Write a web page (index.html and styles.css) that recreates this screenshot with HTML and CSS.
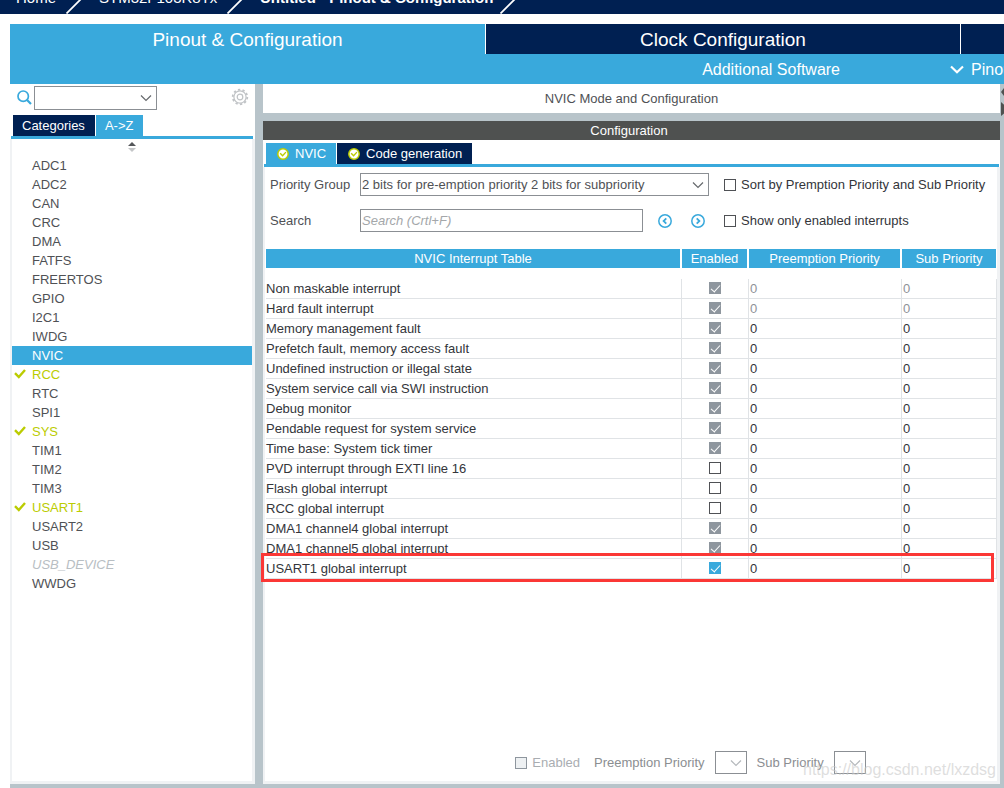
FILE: index.html
```html
<!DOCTYPE html>
<html lang="en">
<head>
<meta charset="utf-8">
<title>Pinout &amp; Configuration</title>
<link rel="stylesheet" href="styles.css">
</head>
<body>
<svg class="defs" aria-hidden="true">
  <symbol id="chevron" viewBox="0 0 12 8"><path d="M1 1.5 6 6.5 11 1.5" fill="none" stroke="currentColor" stroke-width="1.2"/></symbol>
  <symbol id="slash" viewBox="0 0 16 16"><path d="M0.5 15.5 15.5 0.5" fill="none" stroke="#fff" stroke-width="1.8"/></symbol>
  <symbol id="tick" viewBox="0 0 12 10"><path d="M1 4.2 4.8 8 11 1" fill="none" stroke="#bbcc01" stroke-width="2.4"/></symbol>
  <symbol id="ok" viewBox="0 0 12 12"><circle cx="6" cy="6" r="5.2" fill="#fff" stroke="#bbcc01" stroke-width="1.5"/><path d="M3.2 5.2 5.6 7.7 8.9 4.1" fill="none" stroke="#bbcc01" stroke-width="1.4"/></symbol>
</svg>

<nav class="crumbs" aria-label="Breadcrumb">
  <a class="crumb crumb-home" href="#">Home</a>
  <svg class="slash"><use href="#slash"/></svg>
  <a class="crumb crumb-chip" href="#">STM32F103R8Tx</a>
  <svg class="slash"><use href="#slash"/></svg>
  <a class="crumb crumb-page" href="#">Untitled - Pinout &amp; Configuration</a>
  <svg class="slash"><use href="#slash"/></svg>
</nav>

<div class="app">
  <div class="main-tabs">
    <button class="main-tab active" type="button">Pinout &amp; Configuration</button>
    <button class="main-tab" type="button">Clock Configuration</button>
    <button class="main-tab" type="button" aria-label="Project Manager"></button>
  </div>
  <div class="toolbar">
    <button class="tool" type="button">Additional Software</button>
    <button class="tool tool-menu" type="button">
      <svg class="tool-chevron" viewBox="0 0 14 9"><path d="M1 1.5 7 7.2 13 1.5" fill="none" stroke="#fff" stroke-width="2.2"/></svg>
      Pinout
    </button>
  </div>

  <div class="workspace">
    <aside class="sidebar">
      <div class="find">
        <svg class="lens" viewBox="0 0 15 15"><circle cx="6.2" cy="6.2" r="5.2" fill="none" stroke="#39a9dc" stroke-width="1.7"/><path d="M9.8 9.8 14 14" stroke="#39a9dc" stroke-width="2.2"/></svg>
        <div class="combo combo-find">
          <select aria-label="Find peripheral"><option></option></select>
          <svg class="combo-arrow"><use href="#chevron"/></svg>
        </div>
        <button class="gear" type="button" aria-label="Settings">
          <svg viewBox="0 0 18 18" width="18" height="18"><g fill="none" stroke="#c0c3c6"><circle cx="9" cy="9" r="6.1" stroke-width="1.2"/><circle cx="9" cy="9" r="7.3" stroke-width="1.8" stroke-dasharray="2.3 2.287"/><circle cx="9" cy="9" r="2.8" stroke-width="1.2"/></g></svg>
        </button>
      </div>
      <div class="tabs">
        <button class="tab" type="button">Categories</button>
        <button class="tab active" type="button">A-&gt;Z</button>
      </div>
      <div class="list-panel">
        <svg class="sorter" viewBox="0 0 8 10"><path d="M0 4 4 0 8 4z" fill="#55575a"/><path d="M0 6h8L4 10z" fill="#c4c6c8"/></svg>
        <ul class="list">
          <li>ADC1</li>
          <li>ADC2</li>
          <li>CAN</li>
          <li>CRC</li>
          <li>DMA</li>
          <li>FATFS</li>
          <li>FREERTOS</li>
          <li>GPIO</li>
          <li>I2C1</li>
          <li>IWDG</li>
          <li class="selected">NVIC</li>
          <li class="on"><svg><use href="#tick"/></svg>RCC</li>
          <li>RTC</li>
          <li>SPI1</li>
          <li class="on"><svg><use href="#tick"/></svg>SYS</li>
          <li>TIM1</li>
          <li>TIM2</li>
          <li>TIM3</li>
          <li class="on"><svg><use href="#tick"/></svg>USART1</li>
          <li>USART2</li>
          <li>USB</li>
          <li class="off">USB_DEVICE</li>
          <li>WWDG</li>
        </ul>
      </div>
    </aside>

    <main class="mode">
      <h1 class="mode-title">NVIC Mode and Configuration</h1>
      <section class="config">
        <h2 class="config-title">Configuration</h2>
        <div class="tabs config-tabs">
          <button class="tab active" type="button"><svg><use href="#ok"/></svg>NVIC</button>
          <button class="tab" type="button"><svg><use href="#ok"/></svg>Code generation</button>
        </div>
        <div class="config-body">
          <div class="options">
            <label for="group">Priority Group</label>
            <div class="combo">
              <select id="group"><option>2 bits for pre-emption priority 2 bits for subpriority</option></select>
              <svg class="combo-arrow"><use href="#chevron"/></svg>
            </div>
            <label class="check"><input type="checkbox">Sort by Premption Priority and Sub Priority</label>

            <label for="search">Search</label>
            <div class="search">
              <input id="search" type="text" placeholder="Search (Crtl+F)">
              <button type="button" aria-label="Previous"><svg viewBox="0 0 14 14"><circle cx="7" cy="7" r="6.2" fill="none" stroke="#39a9dc" stroke-width="1.5"/><path d="M8.3 4.3 5.6 7l2.7 2.7" fill="none" stroke="#39a9dc" stroke-width="1.8"/></svg></button>
              <button type="button" aria-label="Next"><svg viewBox="0 0 14 14"><circle cx="7" cy="7" r="6.2" fill="none" stroke="#39a9dc" stroke-width="1.5"/><path d="M5.7 4.3 8.4 7l-2.7 2.7" fill="none" stroke="#39a9dc" stroke-width="1.8"/></svg></button>
            </div>
            <label class="check"><input type="checkbox">Show only enabled interrupts</label>
          </div>

          <div class="table-wrap">
            <table class="irq">
              <colgroup><col><col class="col-enabled"><col class="col-preempt"><col class="col-sub"></colgroup>
              <thead>
                <tr><th>NVIC Interrupt Table</th><th>Enabled</th><th>Preemption Priority</th><th>Sub Priority</th></tr>
              </thead>
              <tbody>
                <tr class="spacer"><td colspan="4"></td></tr>
                <tr class="dim"><td>Non maskable interrupt</td><td><input type="checkbox" checked disabled aria-label="Enabled"></td><td>0</td><td>0</td></tr>
                <tr class="dim"><td>Hard fault interrupt</td><td><input type="checkbox" checked disabled aria-label="Enabled"></td><td>0</td><td>0</td></tr>
                <tr><td>Memory management fault</td><td><input type="checkbox" checked disabled aria-label="Enabled"></td><td>0</td><td>0</td></tr>
                <tr><td>Prefetch fault, memory access fault</td><td><input type="checkbox" checked disabled aria-label="Enabled"></td><td>0</td><td>0</td></tr>
                <tr><td>Undefined instruction or illegal state</td><td><input type="checkbox" checked disabled aria-label="Enabled"></td><td>0</td><td>0</td></tr>
                <tr><td>System service call via SWI instruction</td><td><input type="checkbox" checked disabled aria-label="Enabled"></td><td>0</td><td>0</td></tr>
                <tr><td>Debug monitor</td><td><input type="checkbox" checked disabled aria-label="Enabled"></td><td>0</td><td>0</td></tr>
                <tr><td>Pendable request for system service</td><td><input type="checkbox" checked disabled aria-label="Enabled"></td><td>0</td><td>0</td></tr>
                <tr><td>Time base: System tick timer</td><td><input type="checkbox" checked disabled aria-label="Enabled"></td><td>0</td><td>0</td></tr>
                <tr><td>PVD interrupt through EXTI line 16</td><td><input type="checkbox" aria-label="Enabled"></td><td>0</td><td>0</td></tr>
                <tr><td>Flash global interrupt</td><td><input type="checkbox" aria-label="Enabled"></td><td>0</td><td>0</td></tr>
                <tr><td>RCC global interrupt</td><td><input type="checkbox" aria-label="Enabled"></td><td>0</td><td>0</td></tr>
                <tr><td>DMA1 channel4 global interrupt</td><td><input type="checkbox" checked disabled aria-label="Enabled"></td><td>0</td><td>0</td></tr>
                <tr><td>DMA1 channel5 global interrupt</td><td><input type="checkbox" checked disabled aria-label="Enabled"></td><td>0</td><td>0</td></tr>
                <tr><td>USART1 global interrupt</td><td><input type="checkbox" checked aria-label="Enabled"></td><td>0</td><td>0</td></tr>
              </tbody>
            </table>
            <div class="highlight"></div>
          </div>

          <div class="editor">
            <label class="check"><input class="muted" type="checkbox" disabled>Enabled</label>
            <label for="pre">Preemption Priority</label>
            <div class="combo combo-small"><select id="pre" disabled><option></option></select><svg class="combo-arrow"><use href="#chevron"/></svg></div>
            <label for="sub">Sub Priority</label>
            <div class="combo combo-small"><select id="sub" disabled><option></option></select><svg class="combo-arrow"><use href="#chevron"/></svg></div>
          </div>
        </div>
      </section>
    </main>

    <div class="splitter">
      <svg viewBox="0 0 4 34" width="4" height="34"><path d="M4 4v8L1 8zM1 18l8 7-8 7z" fill="#4f5150"/></svg>
    </div>
  </div>
</div>
<div class="watermark">https://blog.csdn.net/lxzdsg</div>
</body>
</html>
```
FILE: styles.css
```css
* { box-sizing: border-box; }

:root {
  --navy: #002052;
  --blue: #39a9dc;
  --steel: #b8c4ca;
  --line: #e0e3e6;
  --edge: #f0f2f4;
  --text: #4f5155;
}

body {
  margin: 0;
  height: 100vh;
  overflow: hidden;
  display: flex;
  flex-direction: column;
  gap: 10px;
  background: #fff;
  color: var(--text);
  font: 13px/19px "Liberation Sans", Arial, sans-serif;
}

button, input, select { font: inherit; color: inherit; margin: 0; }
button { border: 0; padding: 0; background: none; }
.defs { position: absolute; width: 0; height: 0; }

/* Breadcrumb, scrolled partly out of view */
.crumbs {
  flex: none;
  height: 14px;
  display: flex;
  align-items: flex-end;
  overflow: hidden;
  background: var(--navy);
}
.crumb {
  flex: none;
  padding-bottom: 6px;
  color: #fff;
  font-size: 15px;
  line-height: 20px;
  text-decoration: none;
  white-space: nowrap;
}
.crumb-home { width: 66px; padding-left: 16px; }
.crumb-chip { width: 145px; padding-left: 17px; }
.crumb-page { width: 257px; padding-left: 17px; font-weight: bold; }
.slash { flex: none; width: 16px; height: 16px; }

.app { flex: 1; min-height: 0; margin-left: 10px; display: flex; flex-direction: column; }

.main-tabs { display: grid; grid-template-columns: 475fr 475fr 44fr; height: 30px; }
.main-tab { border-left: 1px solid #fff; background: var(--navy); color: #fff; font-size: 19px; }
.main-tab.active { border-left: 0; background: var(--blue); }

.toolbar {
  flex: none;
  height: 30px;
  display: flex;
  justify-content: flex-end;
  gap: 110px;
  overflow: hidden;
  background: var(--blue);
}
.tool { flex: none; color: #fff; font-size: 16px; white-space: nowrap; }
.tool-menu { width: 54px; display: flex; align-items: center; gap: 7px; }
.tool-chevron { flex: none; width: 14px; height: 9px; }

.workspace {
  flex: 1;
  min-height: 0;
  display: grid;
  grid-template-columns: 245px 1fr 4px;
  padding-bottom: 4px;
  background: var(--steel);
}

/* Shared controls */
.combo { position: relative; height: 23px; }
.combo select {
  display: block;
  width: 100%;
  height: 100%;
  padding: 0 20px 0 1px;
  border: 1px solid #8b8f94;
  border-radius: 0;
  background: #fff;
  appearance: none;
  opacity: 1;
}
.combo-arrow {
  position: absolute;
  right: 5px;
  top: 8px;
  width: 12px;
  height: 8px;
  color: #66696d;
  pointer-events: none;
}

input[type="checkbox"] {
  flex: none;
  display: block;
  width: 12px;
  height: 12px;
  border: 1px solid #4f5155;
  background: #fff;
  appearance: none;
}
input[type="checkbox"]:checked { border: 0; padding: 1px 0 0 4px; background: var(--blue); }
input[type="checkbox"]:checked:disabled { background: #8e969e; }
input[type="checkbox"]:checked::after {
  content: "";
  display: block;
  width: 4px;
  height: 8px;
  border: solid #fff;
  border-width: 0 1px 1px 0;
  transform: rotate(42deg);
}
input.muted { border-color: #8e969e; background: #eef1f3; }
.check { display: flex; align-items: center; gap: 5px; color: #33353a; white-space: nowrap; }

.tabs { display: flex; gap: 1px; border-bottom: 3px solid var(--blue); }
.tab {
  display: flex;
  align-items: center;
  height: 21px;
  padding: 0 10px 0 9px;
  background: var(--navy);
  color: #fff;
}
.tab.active { background: var(--blue); }
.tab svg { width: 12px; height: 12px; margin: 0 6px 0 2px; }

/* Peripheral list */
.sidebar { display: flex; flex-direction: column; background: #fff; }
.find { display: flex; align-items: flex-start; padding: 2px 6px 5px 7px; }
.lens { width: 15px; height: 15px; margin: 4px 2px 0 0; }
.combo-find { width: 123px; height: 24px; }
.gear { margin: 2px 0 0 auto; height: 18px; }
.gear svg { display: block; }
.sidebar .tabs { margin: 0 2px 0 1px; padding-left: 2px; }
.list-panel {
  flex: 1;
  display: flex;
  flex-direction: column;
  align-items: center;
  border: solid var(--edge);
  border-width: 0 3px 3px 2px;
  padding-top: 3px;
}
.sorter { width: 8px; height: 10px; margin-bottom: 4px; }
.list { align-self: stretch; margin: 0; padding: 0; list-style: none; }
.list li { position: relative; height: 19px; padding-left: 20px; line-height: 19px; }
.list svg { position: absolute; left: 2px; top: 4px; width: 12px; height: 10px; }
.list .selected { background: var(--blue); color: #fff; }
.on { color: #bbcc01; }
.off { color: #b8bec3; font-style: italic; }

/* Mode and configuration */
.mode { display: flex; flex-direction: column; gap: 8px; min-width: 0; margin-left: 8px; }
.mode-title, .config-title { margin: 0; font-size: 13px; font-weight: normal; text-align: center; }
.mode-title { padding: 5px 0; line-height: 19px; background: #fff; }
.config { flex: 1; display: flex; flex-direction: column; background: #fff; }
.config-title { padding-right: 5px; background: #4f5150; color: #fff; }
.config-tabs { margin: 3px 1px 0; padding-left: 2px; }
.config-body {
  flex: 1;
  display: flex;
  flex-direction: column;
  border: solid var(--edge);
  border-width: 0 3px 3px 2px;
  padding: 6px 0 7px 1px;
}

.options {
  display: grid;
  grid-template-columns: 90px 1fr 288px;
  align-items: center;
  row-gap: 13px;
  padding-left: 4px;
}
.options .check { padding-left: 15px; }
.search { display: flex; align-items: center; }
.search input {
  flex: 1;
  min-width: 0;
  height: 23px;
  padding: 0 1px;
  border: 1px solid #8b8f94;
}
.search input::placeholder { color: #a4a7aa; font-style: italic; opacity: 1; }
.search button { width: 14px; height: 14px; margin-left: 19px; }
.search button:first-of-type { margin-left: 15px; }
.search button:last-of-type { margin-right: 4px; }
.search svg { display: block; width: 14px; height: 14px; }

.table-wrap { position: relative; margin-top: 17px; }
.irq {
  width: 100%;
  table-layout: fixed;
  border-collapse: separate;
  border-spacing: 0;
  color: #33353a;
}
.col-enabled { width: 67px; }
.col-preempt { width: 153px; }
.col-sub { width: 95px; }
.irq th {
  height: 19px;
  padding: 0;
  border-right: 2px solid #fff;
  background: var(--blue);
  color: #fff;
  font-weight: normal;
}
.irq th:last-child { border-right-width: 1px; }
.irq td {
  height: 20px;
  padding: 0;
  border: solid var(--line);
  border-width: 0 1px 1px 0;
  white-space: nowrap;
}
.irq td:nth-child(2) { padding-bottom: 1px; }
.irq td:nth-child(n+3) { padding-left: 1px; }
.irq input { margin: 0 auto; }
.irq .spacer td { height: 11px; border: 0; }
.dim td + td { color: #8e9298; }

.highlight {
  position: absolute;
  left: -5px;
  right: 3px;
  bottom: -3px;
  height: 29px;
  border: 3px solid #fb3735;
}

.editor {
  display: flex;
  align-items: center;
  justify-content: center;
  gap: 10px;
  margin-top: auto;
  padding-left: 118px;
  color: #8b8e91;
}
.editor .check { margin-right: 4px; color: #a9adb1; }
.combo-small { width: 32px; }
.combo-small .combo-arrow { color: #b4b8bc; }

.splitter { display: flex; align-items: flex-start; }

.watermark {
  position: absolute;
  right: 8px;
  bottom: 8px;
  color: rgba(200, 200, 200, 0.6);
  font-size: 16px;
  line-height: 20px;
}
```
